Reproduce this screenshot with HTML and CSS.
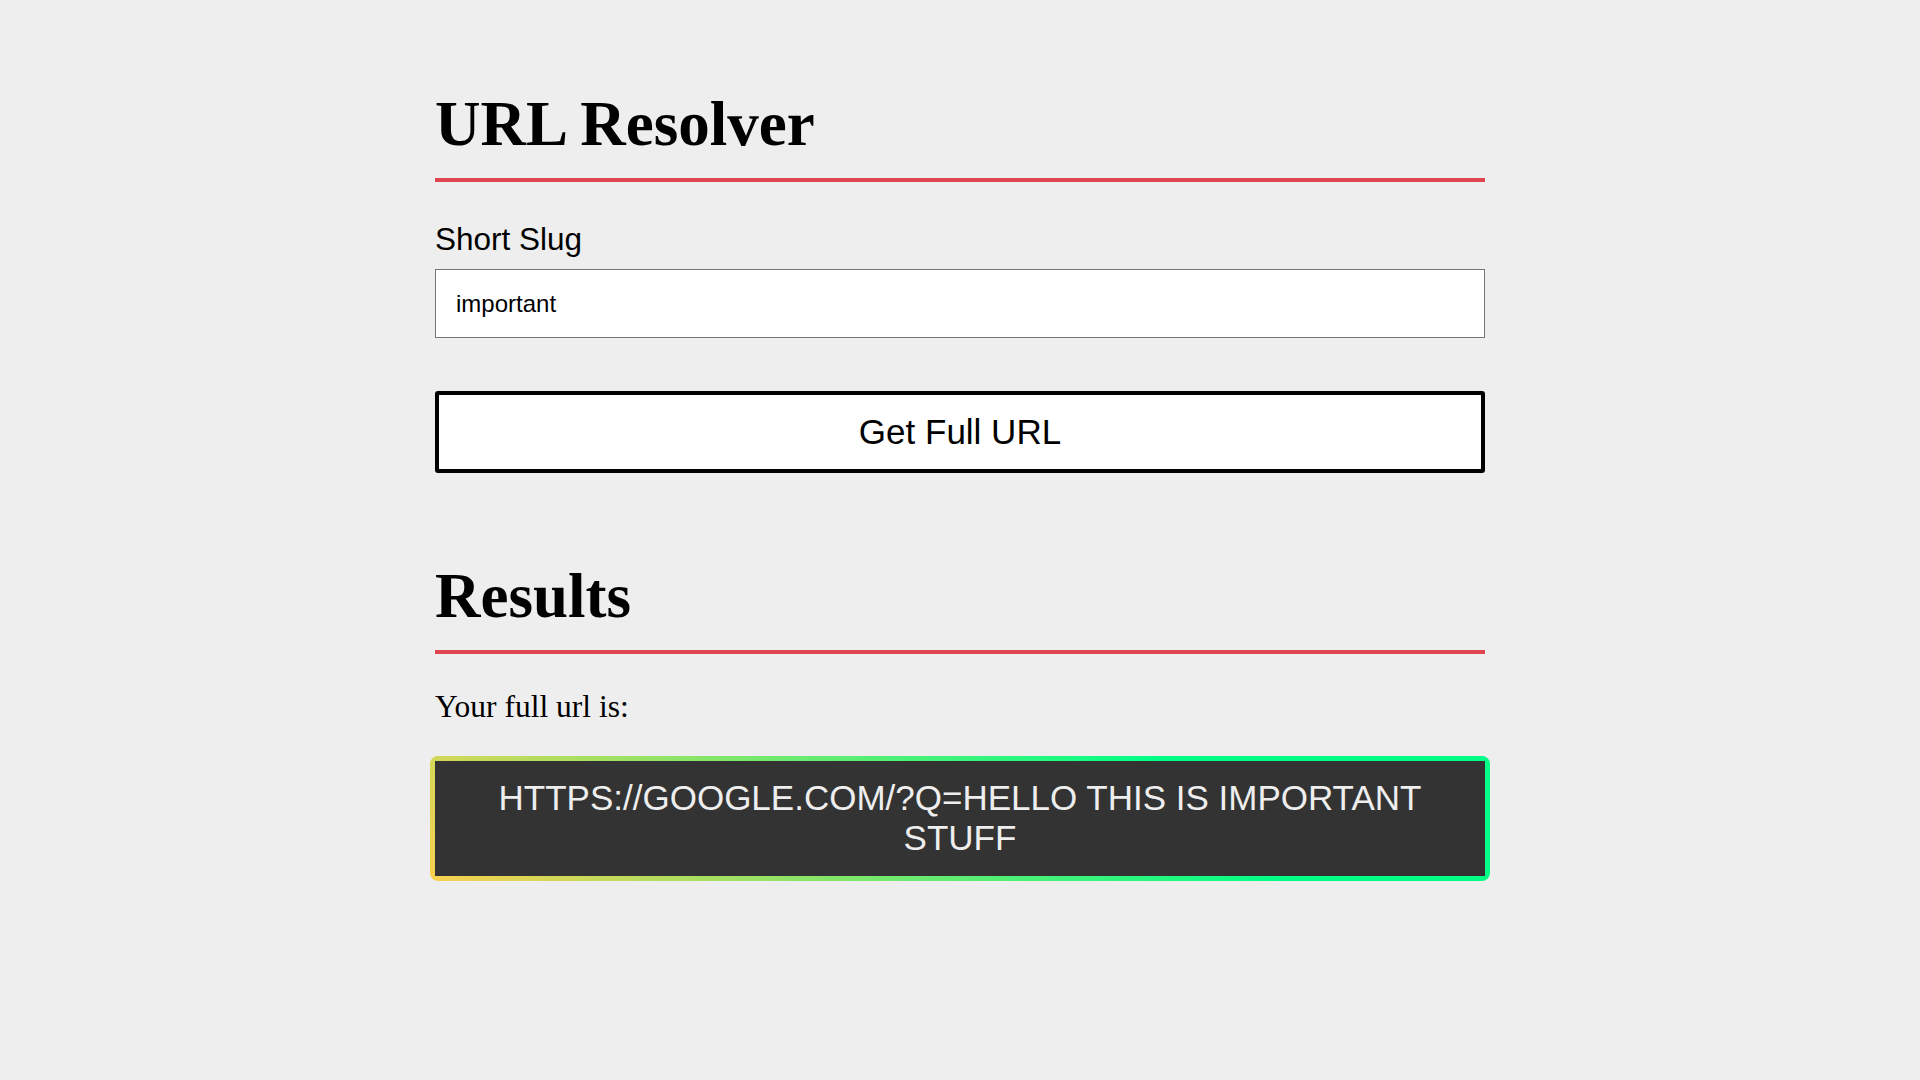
FILE: index.html
```html
<!DOCTYPE html>
<html lang="en">
<head>
<meta charset="utf-8">
<title>URL Resolver</title>
<link rel="stylesheet" href="styles.css">
</head>
<body>
<main class="page">
  <section class="resolver">
    <h1 class="section-title">URL Resolver</h1>
    <form class="resolver-form">
      <label class="field-label" for="slug">Short Slug</label>
      <input class="field-input" id="slug" type="text" value="important">
      <button class="submit-btn" type="button">Get Full URL</button>
    </form>
  </section>
  <section class="results">
    <h1 class="section-title results-title">Results</h1>
    <p class="results-text">Your full url is:</p>
    <div class="result-frame">
      <div class="result-box">https://google.com/?q=hello this is important stuff</div>
    </div>
  </section>
</main>
</body>
</html>
```

FILE: styles.css
```css
html, body {
  margin: 0;
  padding: 0;
}

body {
  background: #eeeeee;
  color: #000;
  font-family: "Liberation Serif", "Times New Roman", serif;
}

.page {
  width: 1050px;
  margin: 0 auto;
  padding-top: 87px;
}

.section-title {
  margin: 0;
  font-family: "Liberation Serif", "Times New Roman", serif;
  font-weight: 700;
  font-size: 63px;
  line-height: 74px;
  padding-bottom: 17px;
  border-bottom: 4px solid #e04651;
}

.resolver-form {
  display: flex;
  flex-direction: column;
}

.field-label {
  display: block;
  margin-top: 39px;
  margin-bottom: 12px;
  font-family: "Liberation Sans", Arial, sans-serif;
  font-size: 31.5px;
  line-height: 36px;
}

.field-input {
  box-sizing: border-box;
  width: 100%;
  height: 69px;
  margin: 0;
  padding: 0 20px;
  border: 1px solid #767676;
  border-radius: 0;
  background: #fff;
  font-family: "Liberation Sans", Arial, sans-serif;
  font-size: 24px;
  color: #000;
  outline: none;
}

.submit-btn {
  box-sizing: border-box;
  width: 100%;
  height: 82px;
  margin: 53px 0 0;
  padding: 0;
  border: 4px solid #000;
  border-radius: 3px;
  background: #fff;
  font-family: "Liberation Sans", Arial, sans-serif;
  font-size: 35px;
  color: #000;
  cursor: pointer;
}

.results {
  margin-top: 86px;
}

.results-text {
  margin: 35px 0 0;
  font-size: 31.5px;
  line-height: 36px;
}

.result-frame {
  margin: 31px -5px 0;
  padding: 5px;
  border-radius: 8px;
  background: linear-gradient(45deg, #f9d04f 0%, #00ff87 72%);
}

.result-box {
  background: #333333;
  color: #eeeeee;
  padding: 17px 20px 18px;
  text-align: center;
  text-transform: uppercase;
  font-family: "Liberation Sans", Arial, sans-serif;
  font-size: 35px;
  line-height: 40px;
}
```
